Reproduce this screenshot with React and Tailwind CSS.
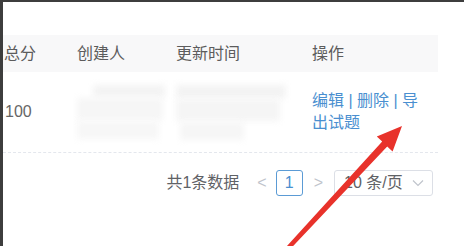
const Arrow = () => (
  <svg className="pointer-events-none absolute left-0 top-0" width="464" height="246" viewBox="0 0 464 246">
    <polygon
      points="278.5,250 379.2,139.6 373.8,134.4 399,124 389.6,149.6 384.2,144.4 284.5,250"
      fill="#e8322b"
    />
  </svg>
);

const Blur = ({ className }) => <div className={'blur-[3px] ' + className} />;

export default function App() {
  return (
    <div className="relative h-[246px] w-[464px] overflow-hidden border-l-[3px] border-t-2 border-[#3d3d3d] bg-white font-['Liberation_Sans','Noto_Sans_CJK_SC',sans-serif]">
      <div className="mt-[33px] w-[435px]">
        {/* header */}
        <div className="flex h-[37px] items-center bg-[#f8f8f9] text-[16px] text-[#5c5c5c]">
          <div className="w-[74px] pl-[1px]">总分</div>
          <div className="w-[99px]">创建人</div>
          <div className="w-[136px]">更新时间</div>
          <div className="flex-1">操作</div>
        </div>
        {/* row */}
        <div className="flex h-[81px] items-center border-b border-dashed border-[#e4e7ed] text-[16px]">
          <div className="w-[74px] pl-[2px] text-[#666]">100</div>
          <div className="w-[99px] pr-[10px]">
            <div className="flex flex-col gap-[1px]">
              <Blur className="ml-[16px] h-[12px] w-[72px] bg-[#f3f3f3]" />
              <Blur className="h-[22px] w-[86px] bg-[#f6f6f6]" />
              <Blur className="h-[18px] w-[82px] bg-[#f7f7f7]" />
            </div>
          </div>
          <div className="w-[136px] pr-[24px]">
            <div className="flex flex-col gap-[1px]">
              <Blur className="h-[13px] w-[110px] bg-[#f3f3f3]" />
              <Blur className="h-[22px] w-[104px] bg-[#f5f5f5]" />
              <Blur className="ml-[4px] h-[18px] w-[64px] bg-[#f6f6f6]" />
            </div>
          </div>
          <div className="flex-1 leading-[22px] text-[#4a8fd0]">
            <div className="whitespace-nowrap">编辑 | 删除 | 导</div>
            <div>出试题</div>
          </div>
        </div>
      </div>
      {/* pagination */}
      <div className="mt-[17px] flex w-[430px] items-center justify-end text-[16px] text-[#5f6266]">
        <span className="mr-[18px]">共1条数据</span>
        <span className="mr-[9px] text-[#c0c4cc]">&lt;</span>
        <div className="flex h-[26px] w-[27px] items-center justify-center rounded-[3px] border border-[#5b9bd5] text-[#4a8fd0]">
          1
        </div>
        <span className="ml-[11px] mr-[11px] text-[#c0c4cc]">&gt;</span>
        <div className="flex h-[26px] w-[99px] items-center justify-between rounded-[3px] border border-[#dcdfe6] pl-[9px] pr-[8px]">
          <span>10 条/页</span>
          <svg width="12" height="8" viewBox="0 0 12 8" fill="none" stroke="#c0c4cc" strokeWidth="1.2">
            <path d="M1 1.5 L6 6.5 L11 1.5" />
          </svg>
        </div>
      </div>
      <Arrow />
    </div>
  );
}
